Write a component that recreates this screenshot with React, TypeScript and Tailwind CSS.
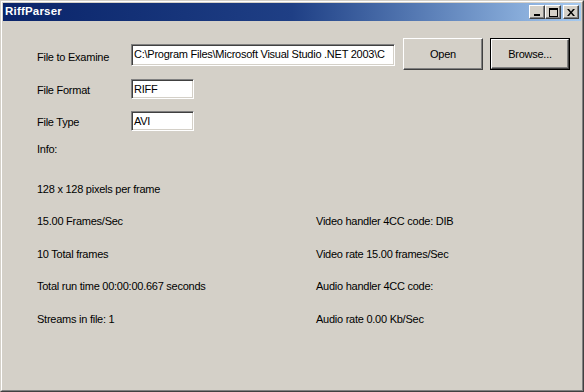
import React from 'react';

const sunken =
  'bg-white border border-t-[#808080] border-l-[#808080] border-r-white border-b-white shadow-[inset_1px_1px_0_#404040,inset_-1px_-1px_0_#d4d0c8] flex items-center pl-[2px] overflow-hidden whitespace-nowrap';

const raised =
  'bg-[#d4d0c8] border border-t-white border-l-white border-r-[#404040] border-b-[#404040] shadow-[inset_-1px_-1px_0_#808080] flex items-center justify-center';

const leftInfo = [
  '15.00 Frames/Sec',
  '10 Total frames',
  'Total run time 00:00:00.667 seconds',
  'Streams in file: 1',
];

const rightInfo = [
  'Video handler 4CC code: DIB',
  'Video rate 15.00 frames/Sec',
  'Audio handler 4CC code:',
  'Audio rate 0.00 Kb/Sec',
];

function CaptionButton({ children }: { children: React.ReactNode }) {
  return <div className={`${raised} w-[16px] h-[14px]`}>{children}</div>;
}

export default function App() {
  return (
    <div
      className="w-[584px] h-[392px] border border-t-[#d4d0c8] border-l-[#d4d0c8] border-r-[#404040] border-b-[#404040] text-[11px] tracking-[-0.25px] text-black"
      style={{ fontFamily: '"Liberation Sans", Arial, sans-serif' }}
    >
      <div className="h-full border border-t-white border-l-white border-r-[#808080] border-b-[#808080] bg-[#d4d0c8] p-px flex flex-col">
        {/* Title bar */}
        <div className="h-[18px] shrink-0 flex items-center bg-gradient-to-r from-[#0a246a] via-[#1f3f85] to-[#a6caf0] pl-[2px] pr-[2px]">
          <span className="text-white font-bold text-[11.5px] tracking-[0.2px]">RiffParser</span>
          <div className="ml-auto flex items-center">
            <CaptionButton>
              <svg width="8" height="8" viewBox="0 0 8 8" className="mt-[1px]">
                <rect x="1" y="5" width="6" height="2" fill="#000" />
              </svg>
            </CaptionButton>
            <CaptionButton>
              <svg width="9" height="9" viewBox="0 0 9 9">
                <rect x="0.5" y="0.5" width="8" height="8" fill="none" stroke="#000" />
                <rect x="0" y="0" width="9" height="2" fill="#000" />
              </svg>
            </CaptionButton>
            <div className="w-[2px]" />
            <CaptionButton>
              <svg width="8" height="7" viewBox="0 0 8 7">
                <path d="M0 0h2l2 2.5L6 0h2L5 3.5 8 7H6L4 4.5 2 7H0l3-3.5z" fill="#000" />
              </svg>
            </CaptionButton>
          </div>
        </div>

        {/* Body */}
        <div className="flex-1 pt-[17px] pl-[34px] flex flex-col">
          <div className="h-[32px] flex items-center">
            <div className="w-[94px] pt-[6px]">File to Examine</div>
            <div className={`${sunken} w-[264px] h-[22px] mt-[1px]`}>
              C:\Program Files\Microsoft Visual Studio .NET 2003\C
            </div>
            <button className={`${raised} w-[80px] h-[32px] ml-[8px]`}>Open</button>
            <div className="ml-[7px] border border-black">
              <button className={`${raised} w-[78px] h-[30px]`}>Browse...</button>
            </div>
          </div>

          <div className="h-[32px] mt-[3px] flex items-center">
            <div className="w-[94px] pt-[2px]">File Format</div>
            <div className={`${sunken} w-[63px] h-[20px]`}>RIFF</div>
          </div>

          <div className="h-[32px] flex items-center">
            <div className="w-[94px] pt-[2px]">File Type</div>
            <div className={`${sunken} w-[63px] h-[20px]`}>AVI</div>
          </div>

          <div className="h-[16px] mt-[4px] flex items-center">Info:</div>

          <div className="h-[32px] mt-[16px] flex items-center">128 x 128 pixels per frame</div>

          <div className="grid grid-cols-[279px_1fr]">
            {leftInfo.map((text, i) => (
              <React.Fragment key={text}>
                <div className="h-[32.5px] flex items-center">{text}</div>
                <div className="h-[32.5px] flex items-center">{rightInfo[i]}</div>
              </React.Fragment>
            ))}
          </div>
        </div>
      </div>
    </div>
  );
}
